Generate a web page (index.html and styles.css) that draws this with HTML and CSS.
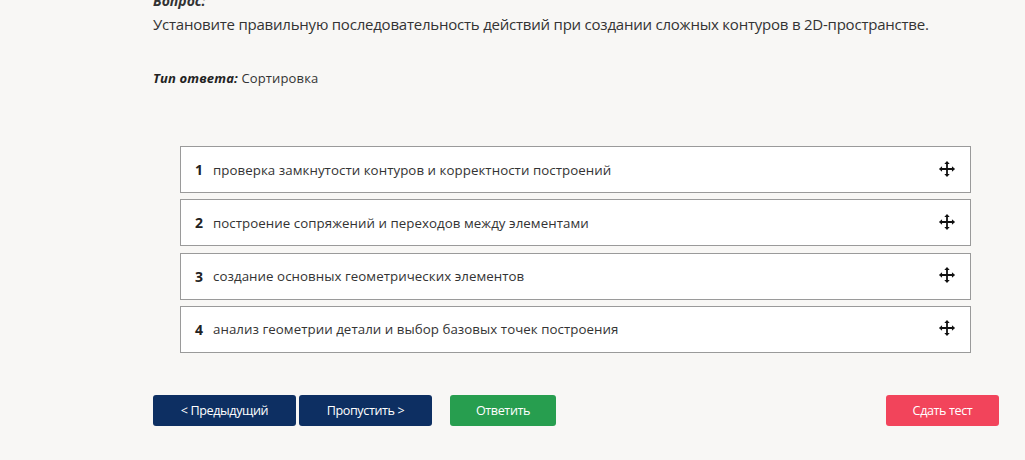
FILE: index.html
```html
<!DOCTYPE html>
<html lang="ru">
<head>
<meta charset="utf-8">
<link rel="stylesheet" href="styles.css">
</head>
<body>
<div class="page">
  <div class="label">Вопрос:</div>
  <div class="question">Установите правильную последовательность действий при создании сложных контуров в 2D-пространстве.</div>
  <div class="type"><b><i>Тип ответа:</i></b> Сортировка</div>
  <div class="list">
    <div class="item"><span class="num">1</span><span class="text">проверка замкнутости контуров и корректности построений</span><svg class="move" viewBox="0 0 20 20" width="18" height="18"><path d="M10 1 L13 4.5 H11 V9 H15.5 V7 L19 10 L15.5 13 V11 H11 V15.5 H13 L10 19 L7 15.5 H9 V11 H4.5 V13 L1 10 L4.5 7 V9 H9 V4.5 H7 Z" fill="#111"/></svg></div>
    <div class="item"><span class="num">2</span><span class="text">построение сопряжений и переходов между элементами</span><svg class="move" viewBox="0 0 20 20" width="18" height="18"><path d="M10 1 L13 4.5 H11 V9 H15.5 V7 L19 10 L15.5 13 V11 H11 V15.5 H13 L10 19 L7 15.5 H9 V11 H4.5 V13 L1 10 L4.5 7 V9 H9 V4.5 H7 Z" fill="#111"/></svg></div>
    <div class="item"><span class="num">3</span><span class="text">создание основных геометрических элементов</span><svg class="move" viewBox="0 0 20 20" width="18" height="18"><path d="M10 1 L13 4.5 H11 V9 H15.5 V7 L19 10 L15.5 13 V11 H11 V15.5 H13 L10 19 L7 15.5 H9 V11 H4.5 V13 L1 10 L4.5 7 V9 H9 V4.5 H7 Z" fill="#111"/></svg></div>
    <div class="item"><span class="num">4</span><span class="text">анализ геометрии детали и выбор базовых точек построения</span><svg class="move" viewBox="0 0 20 20" width="18" height="18"><path d="M10 1 L13 4.5 H11 V9 H15.5 V7 L19 10 L15.5 13 V11 H11 V15.5 H13 L10 19 L7 15.5 H9 V11 H4.5 V13 L1 10 L4.5 7 V9 H9 V4.5 H7 Z" fill="#111"/></svg></div>
  </div>
  <div class="buttons">
    <button class="btn navy prev">&lt; Предыдущий</button>
    <button class="btn navy skip">Пропустить &gt;</button>
    <button class="btn green answer">Ответить</button>
    <span class="spacer"></span>
    <button class="btn red submit">Сдать тест</button>
  </div>
</div>
</body>
</html>
```
FILE: styles.css
```css
html, body {
  margin: 0;
  padding: 0;
  background: #f8f7f5;
}
body {
  font-family: "Open Sans", "Noto Sans", sans-serif;
  color: #333;
  height: 460px;
  overflow: hidden;
}
.page {
  width: 846px;
  margin-left: 153px;
  margin-top: -9px;
}
.label {
  font-size: 14px;
  font-weight: 700;
  font-style: italic;
  line-height: 20px;
}
.question {
  font-size: 15px;
  line-height: 22px;
  margin-top: 2px;
  letter-spacing: -0.22px;
}
.type {
  font-size: 13px;
  line-height: 20px;
  margin-top: 33px;
  letter-spacing: 0.15px;
}
.type b {
  color: #222;
}
.list {
  margin: 58px 0 0 27px;
  width: 791px;
  display: flex;
  flex-direction: column;
  gap: 6.33px;
}
.item {
  box-sizing: border-box;
  height: 47px;
  border: 1px solid #9a9a9a;
  background: #fff;
  display: flex;
  align-items: center;
  padding: 0 14px 0 14px;
  font-size: 13.3px;
  color: #333;
}
.num {
  font-weight: 700;
  font-size: 14px;
  color: #222;
  margin-right: 10px;
}
.text {
  flex: 1;
  letter-spacing: 0.05px;
}
.move {
  display: block;
  margin-top: -2px;
}
.buttons {
  display: flex;
  margin-top: 42px;
  align-items: center;
}
.btn {
  height: 31px;
  border: none;
  border-radius: 3px;
  color: #fff;
  font-family: "Open Sans", sans-serif;
  font-size: 12.6px;
  letter-spacing: -0.4px;
  padding: 0;
}
.navy { background: #0d2f62; }
.green { background: #279e4f; }
.red { background: #f2445b; }
.prev { width: 143px; }
.skip { width: 133px; margin-left: 3px; }
.answer { width: 106px; margin-left: 18px; }
.spacer { flex: 1; }
.submit { width: 113px; }
```
